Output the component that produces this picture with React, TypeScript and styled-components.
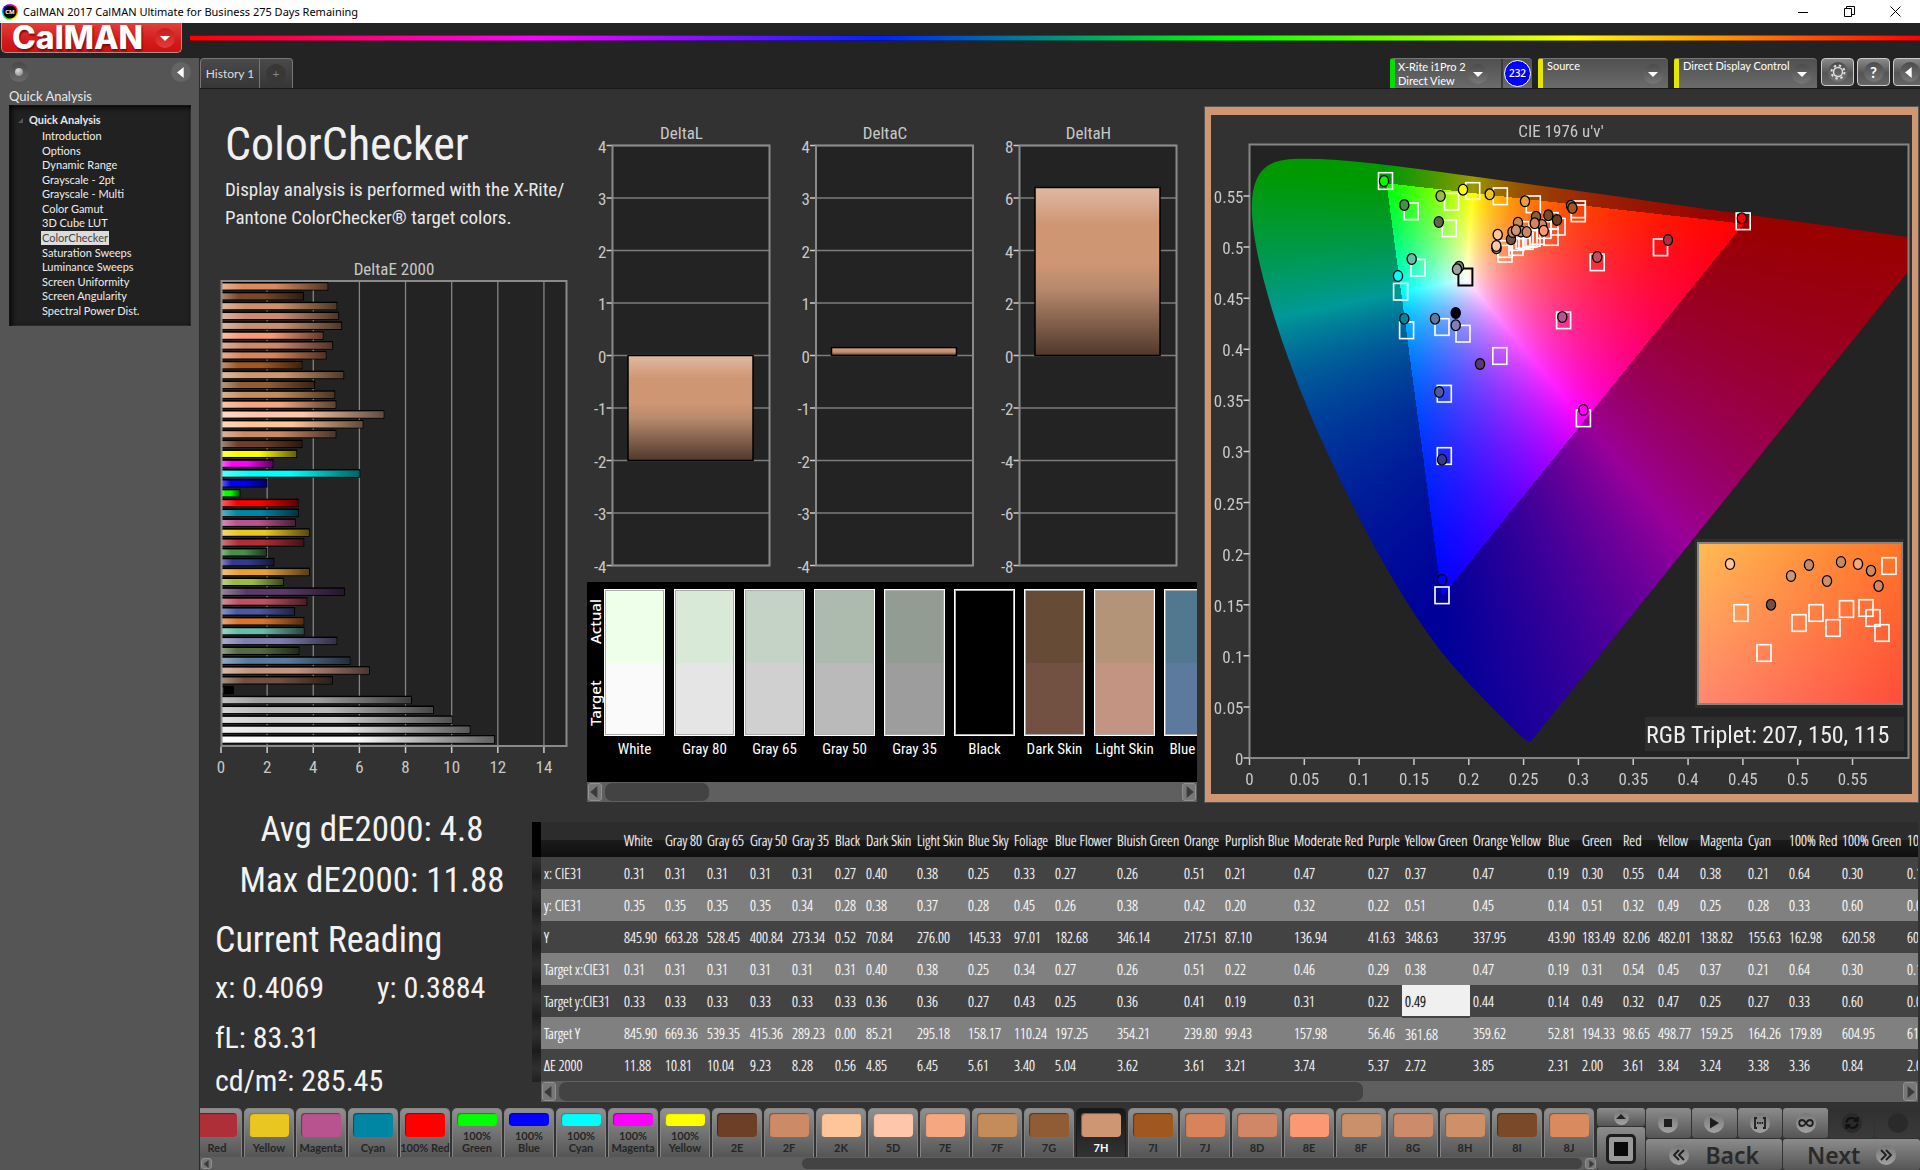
import React, { useEffect, useRef } from "react";
import styled, { createGlobalStyle, css } from "styled-components";

const ui = `Lato, "Open Sans", sans-serif`;
const label = `"Roboto Condensed", "Open Sans Condensed Light", Lato, sans-serif`;
const narrow = `"Open Sans Condensed Light", "Open Sans Condensed", Lato, sans-serif`;

const Global = createGlobalStyle`
  *, *::before, *::after { box-sizing: border-box; }
  body { margin: 0; background: #232323; font-family: ${ui}; color: #e8e8e8; overflow: hidden; }
  button, select { font-family: inherit; }
  h1, h2, p, ul, dl, dd { margin: 0; padding: 0; }
  svg, canvas { display: block; }
`;

/* ---------- data ---------- */

type Patch = { name: string; color: string; de: number; lines?: string[] };

const patches: Patch[] = [
  { name: "White", color: "#fafafa", de: 11.88 },
  { name: "Gray 80", color: "#e6e6e6", de: 10.81 },
  { name: "Gray 65", color: "#d0d0d0", de: 10.04 },
  { name: "Gray 50", color: "#bababa", de: 9.23 },
  { name: "Gray 35", color: "#9f9f9f", de: 8.28 },
  { name: "Black", color: "#000000", de: 0.56 },
  { name: "Dark Skin", color: "#735142", de: 4.85 },
  { name: "Light Skin", color: "#c39481", de: 6.45 },
  { name: "Blue Sky", color: "#5c7a9d", de: 5.61 },
  { name: "Foliage", color: "#576b42", de: 3.4 },
  { name: "Blue Flower", color: "#827fb0", de: 5.04 },
  { name: "Bluish Green", color: "#66bda8", de: 3.62 },
  { name: "Orange", color: "#d9762c", de: 3.61 },
  { name: "Purplish Blue", color: "#4a5ba4", de: 3.21 },
  { name: "Moderate Red", color: "#c35060", de: 3.74 },
  { name: "Purple", color: "#5a3b68", de: 5.37 },
  { name: "Yellow Green", color: "#9cb944", de: 2.72 },
  { name: "Orange Yellow", color: "#e9a02f", de: 3.85 },
  { name: "Blue", color: "#323a92", de: 2.31 },
  { name: "Green", color: "#479048", de: 2.0 },
  { name: "Red", color: "#ae2f38", de: 3.61 },
  { name: "Yellow", color: "#eac620", de: 3.84 },
  { name: "Magenta", color: "#b9538f", de: 3.24 },
  { name: "Cyan", color: "#0086a3", de: 3.38 },
  { name: "100% Red", color: "#ff0000", de: 3.36 },
  { name: "100% Green", color: "#00ff00", de: 0.84, lines: ["100%", "Green"] },
  { name: "100% Blue", color: "#0000ff", de: 2.01, lines: ["100%", "Blue"] },
  { name: "100% Cyan", color: "#00ffff", de: 6.04, lines: ["100%", "Cyan"] },
  { name: "100% Magenta", color: "#ff00ff", de: 2.27, lines: ["100%", "Magenta"] },
  { name: "100% Yellow", color: "#ffff00", de: 3.3, lines: ["100%", "Yellow"] },
  { name: "2E", color: "#6e3f27", de: 3.53 },
  { name: "2F", color: "#cc8a66", de: 5.0 },
  { name: "2K", color: "#fec599", de: 6.17 },
  { name: "5D", color: "#fec6aa", de: 7.08 },
  { name: "7E", color: "#f5a87f", de: 5.0 },
  { name: "7F", color: "#c48b5b", de: 4.95 },
  { name: "7G", color: "#8f5c35", de: 4.08 },
  { name: "7H", color: "#cf9673", de: 5.34 },
  { name: "7I", color: "#a05820", de: 3.53 },
  { name: "7J", color: "#d7845c", de: 4.57 },
  { name: "8D", color: "#cf8768", de: 4.86 },
  { name: "8E", color: "#fc9873", de: 4.44 },
  { name: "8F", color: "#c9906b", de: 5.25 },
  { name: "8G", color: "#cc8c6c", de: 5.12 },
  { name: "8H", color: "#cf9069", de: 5.04 },
  { name: "8I", color: "#7a4a28", de: 3.6 },
  { name: "8J", color: "#d98b5f", de: 4.65 },
];

const menu = [
  "Introduction", "Options", "Dynamic Range", "Grayscale - 2pt", "Grayscale - Multi", "Color Gamut",
  "3D Cube LUT", "ColorChecker", "Saturation Sweeps", "Luminance Sweeps", "Screen Uniformity",
  "Screen Angularity", "Spectral Power Dist.",
];

const comparison = [
  ["White", "#eeffea", "#fafafa"],
  ["Gray 80", "#d9e9d8", "#e5e5e5"],
  ["Gray 65", "#c5d3c6", "#d0d0d0"],
  ["Gray 50", "#adbbae", "#bababa"],
  ["Gray 35", "#929c92", "#9d9d9d"],
  ["Black", "#000000", "#000000"],
  ["Dark Skin", "#664b36", "#735142"],
  ["Light Skin", "#b39478", "#c39481"],
  ["Blue Sky", "#52788f", "#5c7a9d"],
];

const columns: [string, number][] = [
  ["", 80], ["White", 41], ["Gray 80", 42], ["Gray 65", 43], ["Gray 50", 42], ["Gray 35", 43], ["Black", 31],
  ["Dark Skin", 51], ["Light Skin", 51], ["Blue Sky", 46], ["Foliage", 41], ["Blue Flower", 62],
  ["Bluish Green", 67], ["Orange", 41], ["Purplish Blue", 69], ["Moderate Red", 74], ["Purple", 37],
  ["Yellow Green", 68], ["Orange Yellow", 75], ["Blue", 34], ["Green", 41], ["Red", 35], ["Yellow", 42],
  ["Magenta", 48], ["Cyan", 41], ["100% Red", 53], ["100% Green", 65], ["100% Blue", 60],
];

const rows: [string, string][] = [
  ["x: CIE31", "0.31 0.31 0.31 0.31 0.31 0.27 0.40 0.38 0.25 0.33 0.27 0.26 0.51 0.21 0.47 0.27 0.37 0.47 0.19 0.30 0.55 0.44 0.38 0.21 0.64 0.30 0.15"],
  ["y: CIE31", "0.35 0.35 0.35 0.35 0.34 0.28 0.38 0.37 0.28 0.45 0.26 0.38 0.42 0.20 0.32 0.22 0.51 0.45 0.14 0.51 0.32 0.49 0.25 0.28 0.33 0.60 0.06"],
  ["Y", "845.90 663.28 528.45 400.84 273.34 0.52 70.84 276.00 145.33 97.01 182.68 346.14 217.51 87.10 136.94 41.63 348.63 337.95 43.90 183.49 82.06 482.01 138.82 155.63 162.98 620.58 60.27"],
  ["Target x:CIE31", "0.31 0.31 0.31 0.31 0.31 0.31 0.40 0.38 0.25 0.34 0.27 0.26 0.51 0.22 0.46 0.29 0.38 0.47 0.19 0.31 0.54 0.45 0.37 0.21 0.64 0.30 0.15"],
  ["Target y:CIE31", "0.33 0.33 0.33 0.33 0.33 0.33 0.36 0.36 0.27 0.43 0.25 0.36 0.41 0.19 0.31 0.22 0.49 0.44 0.14 0.49 0.32 0.47 0.25 0.27 0.33 0.60 0.06"],
  ["Target Y", "845.90 669.36 539.35 415.36 289.23 0.00 85.21 295.18 158.17 110.24 197.25 354.21 239.80 99.43 157.98 56.46 361.68 359.62 52.81 194.33 98.65 498.77 159.25 164.26 179.89 604.95 61.06"],
  ["ΔE 2000", "11.88 10.81 10.04 9.23 8.28 0.56 4.85 6.45 5.61 3.40 5.04 3.62 3.61 3.21 3.74 5.37 2.72 3.85 2.31 2.00 3.61 3.84 3.24 3.38 3.36 0.84 2.01"],
];

/* ---------- window title ---------- */

const Page = styled.div`
  min-height: 100vh;
  display: flex;
  flex-direction: column;
`;

const TitleBar = styled.header`
  height: 23px;
  background: #fff;
  color: #000;
  display: flex;
  align-items: center;
  padding: 0 2px;
  gap: 5px;
  font: 11px/20px "Noto Sans", sans-serif;
`;

const AppMark = styled.span`
  width: 16px;
  height: 16px;
  border-radius: 50%;
  display: grid;
  place-items: center;
  background: radial-gradient(circle, #000 0 6px, transparent 7px),
    conic-gradient(#f0f, #f00, #fa0, #ff0, #0f0, #0cf, #00f, #f0f);
  color: #fff;
  font: 700 6px/8px "Open Sans", sans-serif;
`;

const WindowButtons = styled.div`
  margin-left: auto;
  display: flex;
  button {
    width: 46px;
    height: 22px;
    display: grid;
    place-items: center;
    border: 0;
    padding: 0;
    background: none;
  }
`;

/* ---------- brand bar ---------- */

const Brand = styled.div`
  height: 35px;
  display: flex;
  align-items: flex-start;
  gap: 8px;
  padding-left: 1px;
`;

const Logo = styled.button`
  width: 181px;
  height: 30px;
  border: 1px solid #b98a8a;
  border-top: 0;
  border-radius: 0 0 5px 5px;
  background: linear-gradient(#e23f3c, #d31c1b 60%, #c11);
  color: #fff;
  display: flex;
  align-items: center;
  justify-content: space-between;
  padding: 0 6px 0 10px;
  && {
    font: 800 32px/28px Inter, sans-serif;
  }
  text-shadow: 1px 2px 2px #7a0a0a;
`;

const Round = styled.span<{ $size?: number; $tone?: string }>`
  width: ${(p) => p.$size ?? 20}px;
  height: ${(p) => p.$size ?? 20}px;
  flex: none;
  border-radius: 50%;
  background: ${(p) => p.$tone ?? "linear-gradient(#4b4b4b, #777)"};
  display: grid;
  place-items: center;
`;

const Spectrum = styled.div`
  flex: 1;
  height: 6px;
  margin-top: 12px;
  border: solid rgba(0, 0, 0, 0.4);
  border-width: 1px 0;
  background: linear-gradient(90deg, #f00, #f0f 20%, #02f 40%, #0f0 60%, #ff0 80%, #f00) border-box;
`;

/* ---------- shell ---------- */

const Shell = styled.div`
  flex: 1;
  display: flex;
`;

const Sidebar = styled.aside`
  width: 200px;
  flex: none;
  background: #555;
  border-right: 1px solid #2a2a2a;
  padding: 4px 8px 4px 9px;
`;

const SideTools = styled.div`
  display: flex;
  justify-content: space-between;
`;

const PlainButton = styled.button`
  border: 0;
  padding: 0;
  background: none;
  color: inherit;
`;

const SideTitle = styled.h2`
  font-size: 13px;
  line-height: 16px;
  font-weight: 400;
  margin: 6px 0 1px;
`;

const Tree = styled.nav`
  height: 221px;
  background: #212121;
  box-shadow: inset 2px 2px 6px #000, inset 0 0 0 1px #3a3a3a;
  padding: 8px 4px 8px 9px;
  font-size: 11px;
  line-height: 14px;
  display: flex;
  flex-direction: column;
  strong {
    display: flex;
    align-items: center;
    gap: 6px;
    margin-bottom: 2px;
  }
  ul {
    list-style: none;
    flex: 1;
    display: flex;
    flex-direction: column;
    justify-content: space-between;
    padding-left: 23px;
  }
`;

const TreeLink = styled.a<{ $on?: boolean }>`
  display: inline-block;
  padding: 0 1px;
  text-decoration: none;
  color: ${(p) => (p.$on ? "#444" : "#eee")};
  background: ${(p) => (p.$on ? "#dcdcdc" : "none")};
`;

const Main = styled.main`
  flex: 1;
  min-width: 0;
  display: flex;
  flex-direction: column;
  background: #323232;
`;

const TopBar = styled.div`
  height: 31px;
  background: #232323;
  border-bottom: 1px solid #1a1a1a;
  display: flex;
  overflow: hidden;
`;

const Tabs = styled.div`
  display: flex;
  border: 1px solid #777;
  border-bottom: 0;
  border-radius: 4px 4px 0 0;
  background: linear-gradient(#4a4a4a, #363636);
  button {
    font-size: 12px;
    line-height: 16px;
    color: #ddd;
    width: 58px;
    white-space: nowrap;
  }
  button + button {
    width: 33px;
    border-left: 1px solid #777;
    display: grid;
    place-items: center;
    color: #888;
  }
`;

const Devices = styled.div`
  margin-left: auto;
  margin-right: -6px;
  display: flex;
  gap: 6px;
`;

const Device = styled.div<{ $mark: string; $w: number }>`
  width: ${(p) => p.$w}px;
  display: flex;
  align-items: center;
  border-left: 5px solid ${(p) => p.$mark};
  border-top: 1px solid #777;
  border-radius: 3px 4px 0 0;
  background: linear-gradient(#505050, #6b6b6b);
  position: relative;
`;

const DeviceButton = styled.button`
  flex: 1;
  height: 30px;
  display: flex;
  align-items: center;
  justify-content: space-between;
  text-align: left;
  white-space: nowrap;
  border: 0;
  background: none;
  color: #fff;
  padding: 0 13px 0 3px;
  font-size: 11px;
  line-height: 14px;
`;

const DeviceSelect = styled.select`
  appearance: none;
  width: 100%;
  height: 30px;
  border: 0;
  background: none;
  color: #fff;
  padding: 0 0 16px 4px;
  font-size: 11px;
  line-height: 14px;
`;

const SelectArrow = styled.span`
  position: absolute;
  right: 5px;
  top: 5px;
  pointer-events: none;
`;

const Counter = styled.span`
  width: 31px;
  height: 30px;
  border-left: 2px solid #3a3a3a;
  display: grid;
  place-items: center;
  span {
    width: 27px;
    height: 27px;
    border-radius: 50%;
    border: 1px solid #fff;
    background: #00f;
    color: #fff;
    font: 600 10px/25px "Open Sans", sans-serif;
    text-align: center;
  }
`;

const ToolGroup = styled.div`
  display: flex;
  gap: 3px;
  margin-left: -2px;
`;

const Tool = styled.button`
  width: 33px;
  height: 28px;
  border: 1px solid #ccc;
  border-radius: 4px;
  background: linear-gradient(#8a8a8a, #555 55%, #666);
  color: #fff;
  display: grid;
  place-items: center;
  padding: 0;
  b {
    font-size: 15px;
    line-height: 18px;
  }
`;

/* ---------- upper workspace ---------- */

const Upper = styled.div`
  display: grid;
  grid-template-columns: minmax(0, 387fr) minmax(0, 617fr) minmax(0, 716fr);
`;

const Intro = styled.section`
  padding-top: 27px;
  h1 {
    font: 400 46px/56px ${label};
    color: #f0f0f0;
    padding-left: 25px;
  }
  p {
    font: 400 19px/28px ${label};
    padding-left: 25px;
    margin-top: 4px;
    white-space: nowrap;
  }
`;

const Chart = styled.svg`
  width: 100%;
  height: auto;
  font-family: ${label};
  font-size: 17px;
  fill: #c8c8c8;
`;

const Middle = styled.section`
  padding-right: 7px;
`;

const Compare = styled.div`
  height: 200px;
  background: #000;
  display: flex;
  overflow: hidden;
  padding-top: 7px;
`;

const Sides = styled.div`
  width: 17px;
  height: 147px;
  padding: 10px 0;
  flex: none;
  writing-mode: vertical-rl;
  transform: rotate(180deg);
  display: flex;
  justify-content: space-between;
  text-align: center;
  font: 500 15px/17px "Noto Sans", sans-serif;
  color: #fff;
`;

const Sample = styled.figure`
  flex: none;
  width: 61px;
  margin: 0 9px 0 0;
  text-align: center;
  figcaption {
    margin: 4px -5px 0;
    font: 400 15px/18px ${label};
    white-space: nowrap;
    color: #fff;
  }
`;

const SampleBox = styled.div<{ $top: string; $bottom: string }>`
  height: 147px;
  border: 2px solid #fff;
  outline: 1px solid rgba(90, 90, 90, 0.5);
  outline-offset: -2px;
  background: linear-gradient(${(p) => p.$top} 50%, ${(p) => p.$bottom} 50%);
`;

const Scroller = styled.div<{ $h: number }>`
  height: ${(p) => p.$h}px;
  background: #5f5f5f;
  display: flex;
  align-items: stretch;
  padding: 1px;
  button {
    width: ${(p) => (p.$h > 15 ? 14 : 11)}px;
    flex: none;
    border: 1px solid #909090;
    border-radius: 3px;
    background: #777;
    padding: 0;
    display: grid;
    place-items: center;
  }
`;

const Track = styled.div`
  flex: 1;
  display: flex;
  padding: 0 3px;
`;

const Thumb = styled.div<{ $size: number }>`
  flex: ${(p) => p.$size};
  border-radius: 7px;
  background: #434343;
`;

const Gap = styled.div<{ $part: number }>`
  flex: ${(p) => p.$part};
`;

const CiePanel = styled.section`
  margin: 17px 1px 0 0;
  border: solid #cf9673;
  border-width: 9px 7px;
  outline: 1px solid #555;
  outline-offset: -1px;
  position: relative;
  canvas {
    width: 100%;
    height: auto;
  }
  > svg {
    position: absolute;
    inset: 0;
    height: 100%;
  }
`;

/* ---------- lower workspace ---------- */

const Lower = styled.div`
  flex: 1;
  display: grid;
  grid-template-columns: minmax(0, 332fr) minmax(0, 1388fr);
  padding-top: 19px;
`;

const Readings = styled.section`
  font: 400 30px/36px ${label};
  color: #f2f2f2;
  padding-left: 15px;
  white-space: nowrap;
`;

const Summary = styled.div`
  font-size: 35px;
  line-height: 51px;
  text-align: center;
  margin: -18px 3px 0 0;
`;

const CurrentTitle = styled.h2`
  font-size: 36px;
  line-height: 46px;
  font-weight: 400;
  margin-top: 11px;
`;

const Pair = styled.div`
  display: grid;
  grid-template-columns: 162px 1fr;
  line-height: 50px;
`;

const TableWrap = styled.section`
  display: flex;
  align-items: flex-start;
  padding-right: 2px;
  min-width: 0;
`;

const RowHeads = styled.div`
  width: 9px;
  flex: none;
  height: 260px;
  background: linear-gradient(#000 0 35px, transparent 35px),
    repeating-linear-gradient(#2e2e2e 0 3px, #1c1c1c 19px, #2e2e2e 35px);
`;

const TableBody = styled.div`
  flex: 1;
  min-width: 0;
`;

const Clip = styled.div`
  overflow: hidden;
`;

const Table = styled.table`
  table-layout: fixed;
  border-collapse: collapse;
  font: 400 15px/20px ${narrow};
  color: #fff;
  text-shadow: 0 0 1px rgba(255, 255, 255, 0.7);
  white-space: nowrap;
  th, td {
    padding: 0 0 0 3px;
    text-align: left;
    font-weight: 400;
  }
  thead tr {
    height: 35px;
    background: linear-gradient(#2c2c2c 50%, #1b1b1b 51%, #0f0f0f);
  }
  tbody tr { height: 32px; background: #434343; }
  tbody tr:nth-child(even) { background: #808080; }
`;

const Col = styled.col<{ $w: number }>`
  width: ${(p) => p.$w}px;
`;

const Cell = styled.td<{ $on: boolean }>`
  ${(p) =>
    p.$on &&
    css`
      background: #f0f0f0;
      color: #000;
      text-shadow: 0 0 1px #333;
      border-bottom: 2px solid #434343;
    `}
`;

/* ---------- bottom bar ---------- */

const Bottom = styled.footer`
  height: 64px;
  padding-top: 2px;
  display: flex;
  background: #323232;
`;

const PatchArea = styled.div`
  flex: 1;
  min-width: 0;
`;

const PatchStrip = styled.div`
  display: flex;
  justify-content: flex-end;
  overflow: hidden;
  height: 49px;
  gap: 2px;
  padding-right: 3px;
`;

const PatchButton = styled.button<{ $on: boolean }>`
  flex: none;
  width: 50px;
  border: 1px solid ${(p) => (p.$on ? "#1b1b1b" : "#858585")};
  border-bottom: 0;
  border-radius: 5px 5px 0 0;
  background: ${(p) => (p.$on ? "linear-gradient(#181818, #333)" : "linear-gradient(#909090, #555)")};
  color: ${(p) => (p.$on ? "#fff" : "#262626")};
  font-size: 11px;
  font-weight: 700;
  line-height: 12px;
  padding: 4px 0 3px;
  display: flex;
  flex-direction: column;
  align-items: center;
  justify-content: space-between;
  span { white-space: nowrap; }
`;

const Chip = styled.i<{ $c: string }>`
  width: 40px;
  flex: 1;
  max-height: 24px;
  margin-bottom: 4px;
  border-radius: 4px;
  background: ${(p) => p.$c};
  box-shadow: inset 1px 1px 1px rgba(0, 0, 0, 0.4);
`;

const Transport = styled.div`
  width: 323px;
  flex: none;
  display: grid;
  grid-template-columns: 48px 1fr;
  gap: 1px;
`;

const Stack = styled.div`
  display: grid;
  grid-template-rows: 18px 1fr;
  gap: 1px;
`;

const Grid = styled.div`
  display: grid;
  grid-template-columns: repeat(6, 1fr);
  grid-template-rows: 30px 1fr;
  gap: 1px;
`;

const Key = styled.button<{ $off?: boolean; $span?: number }>`
  grid-column: span ${(p) => p.$span ?? 1};
  border: 0;
  padding: 0;
  border-radius: 3px;
  background: ${(p) => (p.$off ? "linear-gradient(#303030, #3a3a3a)" : "linear-gradient(#8c8c8c, #555)")};
  color: #2a2a2a;
  display: flex;
  align-items: center;
  justify-content: center;
  gap: 16px;
  && {
    font: 600 23px/28px "Noto Sans", sans-serif;
  }
`;

const StopFrame = styled.span`
  width: 30px;
  height: 30px;
  border: 3px solid #1c1c1c;
  border-radius: 5px;
  background: #999;
  display: grid;
  place-items: center;
`;

/* ---------- small drawings ---------- */

const Tri = ({ dir, fill = "#fff", w = 8 }: { dir: "l" | "r" | "u" | "d"; fill?: string; w?: number }) => {
  const d = { l: "M7 0 L1 5 L7 10Z", r: "M3 0 L9 5 L3 10Z", u: "M0 7 L5 2 L10 7Z", d: "M0 3 L10 3 L5 8Z" }[dir];
  return (
    <svg width={w} height={w} viewBox="0 0 10 10" aria-hidden>
      <path d={d} fill={fill} />
    </svg>
  );
};

const Scroll = ({ h, before, size, after }: { h: number; before: number; size: number; after: number }) => (
  <Scroller $h={h}>
    <button aria-label="Scroll left"><Tri dir="l" fill="#3a3a3a" w={h > 15 ? 12 : 8} /></button>
    <Track>
      <Gap $part={before} />
      <Thumb $size={size} />
      <Gap $part={after} />
    </Track>
    <button aria-label="Scroll right"><Tri dir="r" fill="#3a3a3a" w={h > 15 ? 12 : 8} /></button>
  </Scroller>
);

const Gear = () => (
  <svg width="16" height="16" viewBox="0 0 16 16" fill="none" stroke="#ddd" aria-hidden>
    <circle cx="8" cy="8" r="4.5" strokeWidth="1.5" />
    <circle cx="8" cy="8" r="6.5" strokeWidth="2" strokeDasharray="2.4 2.7" />
  </svg>
);

/* ---------- DeltaE bars ---------- */

const DeltaE = () => {
  const unit = 346 / 15;
  const pitch = 9.85;
  return (
    <Chart viewBox="0 0 387 556" role="img" aria-label="DeltaE 2000">
      <defs>
        <linearGradient id="barH">
          <stop offset="0" stopColor="#fff" stopOpacity=".35" />
          <stop offset=".2" stopColor="#fff" stopOpacity="0" />
          <stop offset=".5" stopColor="#000" stopOpacity="0" />
          <stop offset="1" stopColor="#000" stopOpacity=".62" />
        </linearGradient>
      </defs>
      <text x="194" y="43" textAnchor="middle">DeltaE 2000</text>
      <rect x="21" y="49" width="346" height="465" fill="#232323" />
      {[2, 4, 6, 8, 10, 12, 14].map((v) => (
        <line key={v} x1={21 + v * unit} x2={21 + v * unit} y1="49" y2="514" stroke="#858585" strokeWidth="1.3" />
      ))}
      {[...patches].reverse().map((p, i) => (
        <g key={p.name}>
          <rect x="21" y={50 + i * pitch} width={p.de * unit} height="8.5" fill="#000" />
          <rect x="22" y={51.5 + i * pitch} width={p.de * unit - 2} height="6" fill={p.color} />
          <rect x="22" y={51.5 + i * pitch} width={p.de * unit - 2} height="6" fill="url(#barH)" />
        </g>
      ))}
      <rect x="21.5" y="49" width="345" height="465" fill="none" stroke="#8a8a8a" strokeWidth="2" />
      {[0, 2, 4, 6, 8, 10, 12, 14].map((v) => (
        <g key={v}>
          <line x1={21 + v * unit} x2={21 + v * unit} y1="515" y2="521" stroke="#ccc" strokeWidth="1.5" />
          <text x={21 + v * unit} y="541" textAnchor="middle">{v}</text>
        </g>
      ))}
    </Chart>
  );
};

/* ---------- DeltaL / C / H ---------- */

const deltas = [
  { title: "DeltaL", max: 4, value: -2 },
  { title: "DeltaC", max: 4, value: 0.15 },
  { title: "DeltaH", max: 8, value: 6.4 },
];

const DeltaLCH = () => (
  <Chart viewBox="0 0 610 493" role="img" aria-label="DeltaL, DeltaC and DeltaH">
    <defs>
      <linearGradient id="barV" x1="0" x2="0" y1="0" y2="1">
        <stop offset="0" stopColor="#dfb9a3" />
        <stop offset=".22" stopColor="#cf9673" />
        <stop offset=".45" stopColor="#cf9673" />
        <stop offset=".6" stopColor="#b88a6d" />
        <stop offset="1" stopColor="#50382c" />
      </linearGradient>
    </defs>
    {deltas.map(({ title, max, value }, n) => {
      const x = 25.5 + n * 203.5;
      const y = (v: number) => 266.5 - (v / max) * 210;
      const top = y(Math.max(value, 0));
      const ticks = [4, 3, 2, 1, 0, -1, -2, -3, -4].map((t) => (t * max) / 4);
      return (
        <g key={title}>
          <text x={x + 69} y="50" textAnchor="middle">{title}</text>
          <rect x={x} y="56.5" width="157" height="420" fill="#232323" />
          {ticks.map((t) => (
            <g key={t}>
              <line x1={x} x2={x + 157} y1={y(t)} y2={y(t)} stroke="#7d7d7d" strokeWidth="1.5" />
              <line x1={x - 6} x2={x} y1={y(t)} y2={y(t)} stroke="#ccc" strokeWidth="1.5" />
              <text x={x - 6} y={y(t) + 7} textAnchor="end">{t}</text>
            </g>
          ))}
          <rect x={x} y="56.5" width="157" height="420" fill="none" stroke="#8a8a8a" strokeWidth="2" />
          <rect x={x + 15.5} y={top} width="125" height={(Math.abs(value) / max) * 210} fill="url(#barV)" stroke="#000" strokeWidth="1.5" />
        </g>
      );
    })}
  </Chart>
);

/* ---------- CIE 1976 u'v' diagram ---------- */

const W = 701;
const H = 679;
const plot = { x: 38.5, y: 29.5, w: 659, h: 613.5 };
const scale = { u: 1096.4, v: 1021.8 };
const px = (u: number) => plot.x + u * scale.u;
const py = (v: number) => plot.y + plot.h - v * scale.v;

const locusXY = [
  [0.1741, 0.005], [0.1733, 0.0048], [0.1714, 0.0051], [0.1689, 0.0069], [0.1644, 0.0109], [0.1566, 0.0177],
  [0.144, 0.0297], [0.1355, 0.0399], [0.1241, 0.0578], [0.1096, 0.0868], [0.0913, 0.1327], [0.0687, 0.2007],
  [0.0454, 0.295], [0.0235, 0.4127], [0.0082, 0.5384], [0.0039, 0.6548], [0.0139, 0.7502], [0.0389, 0.812],
  [0.0743, 0.8338], [0.1142, 0.8262], [0.1547, 0.8059], [0.2296, 0.7543], [0.3016, 0.6923], [0.3731, 0.6245],
  [0.4441, 0.5547], [0.5125, 0.4866], [0.5752, 0.4242], [0.627, 0.3725], [0.6658, 0.334], [0.6915, 0.3083],
  [0.719, 0.2809], [0.7347, 0.2653],
];

function colorAt(u: number, v: number): [number, number, number] {
  const X = (9 * u) / (4 * v);
  const Z = (12 - 3 * u - 20 * v) / (4 * v);
  const lin = [
    3.2406 * X - 1.5372 - 0.4986 * Z,
    -0.9689 * X + 1.8758 + 0.0415 * Z,
    0.0557 * X - 0.204 + 1.057 * Z,
  ];
  const top = Math.max(...lin);
  const dim = Math.min(...lin) < 0 ? 0.6 : 1;
  return lin.map((c) => 255 * dim * (Math.max(c, 0) / top)) as [number, number, number];
}

const inset = { x: 487, y: 428, w: 204, h: 161 };
const corners = [[255, 187, 84], [255, 116, 38], [255, 136, 110], [255, 76, 58]];

function paint(canvas: HTMLCanvasElement) {
  const ctx = canvas.getContext("2d");
  if (!ctx) return;
  const field = document.createElement("canvas");
  field.width = W;
  field.height = H;
  const fctx = field.getContext("2d")!;
  const img = fctx.createImageData(W, H);
  for (let y = 0; y < H; y++) {
    for (let x = 0; x < W; x++) {
      const u = (x + 0.5 - plot.x) / scale.u;
      const v = Math.max((plot.y + plot.h - y - 0.5) / scale.v, 0.001);
      const [r, g, b] = colorAt(u, v);
      img.data.set([r, g, b, 255], (y * W + x) * 4);
    }
  }
  fctx.putImageData(img, 0, 0);

  ctx.fillStyle = "#323232";
  ctx.fillRect(0, 0, W, H);
  ctx.fillStyle = "#232323";
  ctx.fillRect(plot.x, plot.y, plot.w, plot.h);
  ctx.save();
  ctx.beginPath();
  ctx.rect(plot.x, plot.y, plot.w, plot.h);
  ctx.clip();
  const pts = locusXY.map(([a, b]) => {
    const d = -2 * a + 12 * b + 3;
    return [px((4 * a) / d), py((9 * b) / d)];
  });
  ctx.beginPath();
  ctx.moveTo(pts[0][0], pts[0][1]);
  for (let i = 1; i < pts.length - 1; i++) {
    const mx = (pts[i][0] + pts[i + 1][0]) / 2;
    const my = (pts[i][1] + pts[i + 1][1]) / 2;
    ctx.quadraticCurveTo(pts[i][0], pts[i][1], mx, my);
  }
  ctx.lineTo(pts[pts.length - 1][0], pts[pts.length - 1][1]);
  ctx.closePath();
  ctx.clip();
  ctx.drawImage(field, 0, 0);
  ctx.restore();

  const zoom = ctx.createImageData(inset.w, inset.h);
  for (let y = 0; y < inset.h; y++) {
    for (let x = 0; x < inset.w; x++) {
      const s = x / inset.w;
      const t = y / inset.h;
      const c = [0, 1, 2].map(
        (k) =>
          (corners[0][k] * (1 - s) + corners[1][k] * s) * (1 - t) + (corners[2][k] * (1 - s) + corners[3][k] * s) * t
      );
      zoom.data.set([c[0], c[1], c[2], 255], (y * inset.w + x) * 4);
    }
  }
  ctx.fillStyle = "#2e2e2e";
  ctx.fillRect(484, 424, 209, 169);
  ctx.putImageData(zoom, inset.x, inset.y);
}

const targets = [
  [174.5, 66], [240.6, 86.7], [261.7, 76], [289.3, 81.3], [322.3, 89.3], [200.2, 96.3], [238.3, 113.3],
  [207, 152.7], [189.6, 176.7], [195.6, 215.3], [231, 212], [252, 218.7], [288.8, 241], [233.3, 278.7],
  [233.3, 341], [372.4, 303.3], [352.6, 205.3], [386.2, 147.3], [449.5, 132.3], [532.2, 106.3],
  [367.3, 94.3], [367.3, 98.3], [231, 480.3], [347, 111.7], [340, 106], [340, 122], [294, 138.7], [305, 132],
  [312, 125], [315, 126], [319, 124], [322, 123], [326, 121], [333, 115], [294, 134], [306, 127], [311, 115],
];

const measured: [number, number, string][] = [
  [173, 66, "#00ff00"], [229.6, 81, "#9cb944"], [252, 74.7, "#ffff00"], [278.7, 79.3, "#eac620"],
  [314, 86.3, "#e9a02f"], [193.3, 90, "#479048"], [227.8, 107, "#576b42"], [200.7, 144, "#66bda8"],
  [187, 161, "#00ffff"], [248, 151.7, "#808080"], [246, 154.3, "#a0a0a0"], [244.7, 198, "#000000"],
  [244.7, 210.3, "#827fb0"], [224, 203.7, "#5c7a9d"], [193.3, 203.7, "#0086a3"], [269, 249, "#5a3b68"],
  [228.2, 277, "#4a5ba4"], [231, 344.7, "#323a92"], [372.4, 295, "#ff00ff"], [351.3, 202, "#b9538f"],
  [386.2, 142, "#c35060"], [457, 125, "#ae2f38"], [530.8, 103.3, "#ff0000"], [360, 90.7, "#a9683a"],
  [361.4, 93, "#a05820"], [231, 465, "#0000ff"], [325, 101.7, "#8f5c35"], [337.3, 100.3, "#7a4a28"],
  [346, 105, "#6e3f27"], [331, 110, "#cc8a66"], [307, 107.7, "#c48b5b"], [300, 124.3, "#735142"],
  [301.5, 117, "#c9906b"], [310, 116.5, "#cc8c6c"], [305, 115.3, "#cf9673"], [315.7, 117, "#cf8768"],
  [323.7, 108.3, "#d7845c"], [332.7, 115.7, "#fc9873"], [285.5, 133.3, "#a58b75"], [285.3, 131, "#fec6aa"],
  [286.7, 119.7, "#fec599"],
];

const insetTargets = [
  [530, 498], [553, 538], [588, 508], [605, 498], [622, 513], [635.5, 494], [655, 493], [662, 503], [671, 518],
  [678, 451],
];

const insetMeasured: [number, number, string][] = [
  [519, 449, "#fec599"], [560, 489.7, "#735142"], [580, 461, "#cf9673"], [598, 450, "#c48b6b"],
  [616, 466, "#cf9069"], [630, 447, "#c48b5b"], [647, 449, "#f5a87f"], [660, 455.7, "#cc8a66"],
  [667.6, 471, "#cf8768"],
];

const Squares = ({ at }: { at: number[][] }) => (
  <g fill="none" stroke="#fff" strokeWidth="1.6">
    {at.map(([x, y], i) => <rect key={i} x={x - 7} y={y - 8.3} width="14" height="16.6" />)}
  </g>
);

const Dots = ({ at }: { at: [number, number, string][] }) => (
  <g stroke="#000" strokeWidth="1.3">
    {at.map(([x, y, c], i) => <ellipse key={i} cx={x} cy={y} rx="4.6" ry="5.4" fill={c} />)}
  </g>
);

const Cie = () => {
  const ref = useRef<HTMLCanvasElement>(null);
  useEffect(() => {
    if (ref.current) paint(ref.current);
  }, []);
  const steps = Array.from({ length: 12 }, (_, i) => i * 5);
  return (
    <CiePanel>
      <canvas ref={ref} width={W} height={H} />
      <Chart viewBox={`0 0 ${W} ${H}`} role="img" aria-label="CIE 1976 u'v' diagram">
        <text x="350" y="22" textAnchor="middle">CIE 1976 u'v'</text>
        <rect x={plot.x} y={plot.y} width={plot.w} height={plot.h} fill="none" stroke="#858585" strokeWidth="2" />
        {steps.map((s) => (
          <g key={s}>
            <path d={`M${px(s / 100)} ${H - 35}v6M${plot.x - 6} ${py(s / 100)}h6`} stroke="#ccc" strokeWidth="1.5" />
            <text x={px(s / 100)} y={H - 9} textAnchor="middle">{s / 100}</text>
            <text x={plot.x - 6} y={py(s / 100) + 7} textAnchor="end">{s / 100}</text>
          </g>
        ))}
        <Squares at={targets} />
        <rect x="247.4" y="153.5" width="14" height="17" fill="none" stroke="#000" strokeWidth="2" />
        <Dots at={measured} />
        <rect x={inset.x} y={inset.y} width={inset.w} height={inset.h} fill="none" stroke="#858585" strokeWidth="2" />
        <Squares at={insetTargets} />
        <Dots at={insetMeasured} />
        <rect x="434" y="602" width="259" height="34" fill="#2e2e2e" />
        <text x="435" y="628" fontSize="24" fill="#eee">RGB Triplet: 207, 150, 115</text>
      </Chart>
    </CiePanel>
  );
};

/* ---------- page ---------- */

const ink = { fill: "none", stroke: "#1e1e1e", strokeWidth: 1.8 } as const;
const light = "linear-gradient(#777, #a2a2a2)";

const keys = [
  { label: "Stop", art: <path d="M4 4h8v8H4z" fill="#1e1e1e" /> },
  { label: "Play", art: <path d="M4 2.5 13 8l-9 5.500z" fill="#1e1e1e" /> },
  { label: "Read series", art: <path {...ink} d="M5 3H3v10h2M11 3h2v10h-2M5 8h1.500M7.300 8h1.500M9.600 8h1.500" /> },
  { label: "Continuous", art: <path {...ink} d="M8 8C6.500 5.500 5.500 5 4.200 5a3 3 0 0 0 0 6C5.500 11 6.500 10.500 8 8s2.500-3 3.800-3a3 3 0 0 1 0 6C10.500 11 9.500 10.500 8 8Z" /> },
  { label: "Refresh", off: true, art: <path {...ink} stroke="#111" strokeWidth={2.2} d="M2.500 7.500C3 4.500 5 3 8 3c2 0 3.500 1 4.500 2.500M13.500 2v4H9.500M13.500 8.500C13 11.500 11 13 8 13c-2 0-3.500-1-4.500-2.500M2.500 14v-4h4" /> },
  { label: "Record", off: true, art: null },
];

const Art = ({ children }: { children?: React.ReactNode }) => (
  <svg width="16" height="16" viewBox="0 0 16 16" aria-hidden>{children}</svg>
);

export default function App() {
  return (
    <Page>
      <Global />
      <TitleBar>
        <AppMark>CM</AppMark>
        <span>CalMAN 2017 CalMAN Ultimate for Business 275 Days Remaining</span>
        <WindowButtons>
          <button aria-label="Minimize"><svg width="10" height="10"><path d="M0 5.500h10" stroke="#000" /></svg></button>
          <button aria-label="Restore">
            <svg width="11" height="11" fill="none" stroke="#000"><path d="M.5 2.500h7v8h-7zM2.500 2.500v-2h8v8h-3" /></svg>
          </button>
          <button aria-label="Close"><svg width="11" height="11"><path d="M.5.5l10 10M10.500.5l-10 10" stroke="#000" /></svg></button>
        </WindowButtons>
      </TitleBar>
      <Brand>
        <Logo>CalMAN<Round $tone="linear-gradient(#c41d1d, #e63a3a)"><Tri dir="d" w={10} /></Round></Logo>
        <Spectrum />
      </Brand>
      <Shell>
        <Sidebar>
          <SideTools>
            <PlainButton aria-label="Record">
              <Round $tone="linear-gradient(#484848, #6a6a6a)"><Round $size={8} $tone="radial-gradient(circle at 35% 30%, #ddd, #777)" /></Round>
            </PlainButton>
            <PlainButton aria-label="Collapse"><Round $tone="#646464"><Tri dir="l" w={11} /></Round></PlainButton>
          </SideTools>
          <SideTitle>Quick Analysis</SideTitle>
          <Tree>
            <strong>
              <svg width="5" height="5" aria-hidden><path d="M5 0v5H0z" fill="#555" /></svg>
              Quick Analysis
            </strong>
            <ul>
              {menu.map((m) => <li key={m}><TreeLink href="#" $on={m === "ColorChecker"}>{m}</TreeLink></li>)}
            </ul>
          </Tree>
        </Sidebar>
        <Main>
          <TopBar>
            <Tabs>
              <PlainButton>History 1</PlainButton>
              <PlainButton aria-label="Add history"><Round $tone="#383838">+</Round></PlainButton>
            </Tabs>
            <Devices>
              <Device $mark="#00e000" $w={142}>
                <DeviceButton>
                  <span>X-Rite i1Pro 2<br />Direct View</span>
                  <Round><Tri dir="d" w={10} /></Round>
                </DeviceButton>
                <Counter><span>232</span></Counter>
              </Device>
              <Device $mark="#e6e600" $w={130}>
                <DeviceSelect aria-label="Source"><option>Source</option></DeviceSelect>
                <SelectArrow><Round><Tri dir="d" w={10} /></Round></SelectArrow>
              </Device>
              <Device $mark="#e6e600" $w={143}>
                <DeviceSelect aria-label="Display"><option>Direct Display Control</option></DeviceSelect>
                <SelectArrow><Round><Tri dir="d" w={10} /></Round></SelectArrow>
              </Device>
              <ToolGroup>
                <Tool aria-label="Settings"><Round><Gear /></Round></Tool>
                <Tool aria-label="Help"><Round><b>?</b></Round></Tool>
                <Tool aria-label="Collapse panel"><Round><Tri dir="l" w={11} /></Round></Tool>
              </ToolGroup>
            </Devices>
          </TopBar>

          <Upper>
            <Intro>
              <h1>ColorChecker</h1>
              <p>Display analysis is performed with the X-Rite/<br />Pantone ColorChecker® target colors.</p>
              <DeltaE />
            </Intro>
            <Middle>
              <DeltaLCH />
              <Compare>
                <Sides><span>Target</span><span>Actual</span></Sides>
                {comparison.map(([name, a, t]) => (
                  <Sample key={name}>
                    <SampleBox $top={a} $bottom={t} />
                    <figcaption>{name}</figcaption>
                  </Sample>
                ))}
              </Compare>
              <Scroll h={20} before={0} size={104} after={472} />
            </Middle>
            <Cie />
          </Upper>

          <Lower>
            <Readings>
              <Summary>
                <p>Avg dE2000: 4.8</p>
                <p>Max dE2000: 11.88</p>
              </Summary>
              <CurrentTitle>Current Reading</CurrentTitle>
              <Pair><span>x: 0.4069</span><span>y: 0.3884</span></Pair>
              <Pair><span>fL: 83.31</span></Pair>
              <p>cd/m²: 285.45</p>
            </Readings>
            <TableWrap>
              <RowHeads />
              <TableBody>
                <Clip>
                  <Table style={{ width: columns.reduce((s, c) => s + c[1], 0) }}>
                    <colgroup>{columns.map(([n, w]) => <Col key={n} $w={w} />)}</colgroup>
                    <thead>
                      <tr>{columns.map(([n]) => <th key={n} scope="col">{n}</th>)}</tr>
                    </thead>
                    <tbody>
                      {rows.map(([name, values]) => (
                        <tr key={name}>
                          <th scope="row">{name}</th>
                          {values.split(" ").map((v, i) => (
                            <Cell key={i} $on={name === "Target y:CIE31" && i === 16}>{v}</Cell>
                          ))}
                        </tr>
                      ))}
                    </tbody>
                  </Table>
                </Clip>
                <Scroll h={21} before={0} size={805} after={537} />
              </TableBody>
            </TableWrap>
          </Lower>

          <Bottom>
            <PatchArea>
              <PatchStrip>
                {patches.slice(20).map((p) => (
                  <PatchButton key={p.name} $on={p.name === "7H"}>
                    <Chip $c={p.color} />
                    {(p.lines ?? [p.name]).map((l) => <span key={l}>{l}</span>)}
                  </PatchButton>
                ))}
              </PatchStrip>
              <Scroll h={13} before={588} size={781} after={0} />
            </PatchArea>
            <Transport>
              <Stack>
                <Key aria-label="Expand"><Round $size={15} $tone={light}><Tri dir="u" fill="#222" w={10} /></Round></Key>
                <Key aria-label="Stop reading"><StopFrame><Art><path d="M1 1h14v14H1z" fill="#0a0a0a" /></Art></StopFrame></Key>
              </Stack>
              <Grid>
                {keys.map((k) => (
                  <Key key={k.label} aria-label={k.label} $off={k.off}>
                    <Round $tone={k.off ? "#2a2a2a" : light}><Art>{k.art}</Art></Round>
                  </Key>
                ))}
                <Key $span={3}><Round $tone={light}><Art><path {...ink} d="M8 3 3 8l5 5M13 3 8 8l5 5" /></Art></Round>Back</Key>
                <Key $span={3}>Next<Round $tone={light}><Art><path {...ink} d="M3 3l5 5-5 5M8 3l5 5-5 5" /></Art></Round></Key>
              </Grid>
            </Transport>
          </Bottom>
        </Main>
      </Shell>
    </Page>
  );
}
